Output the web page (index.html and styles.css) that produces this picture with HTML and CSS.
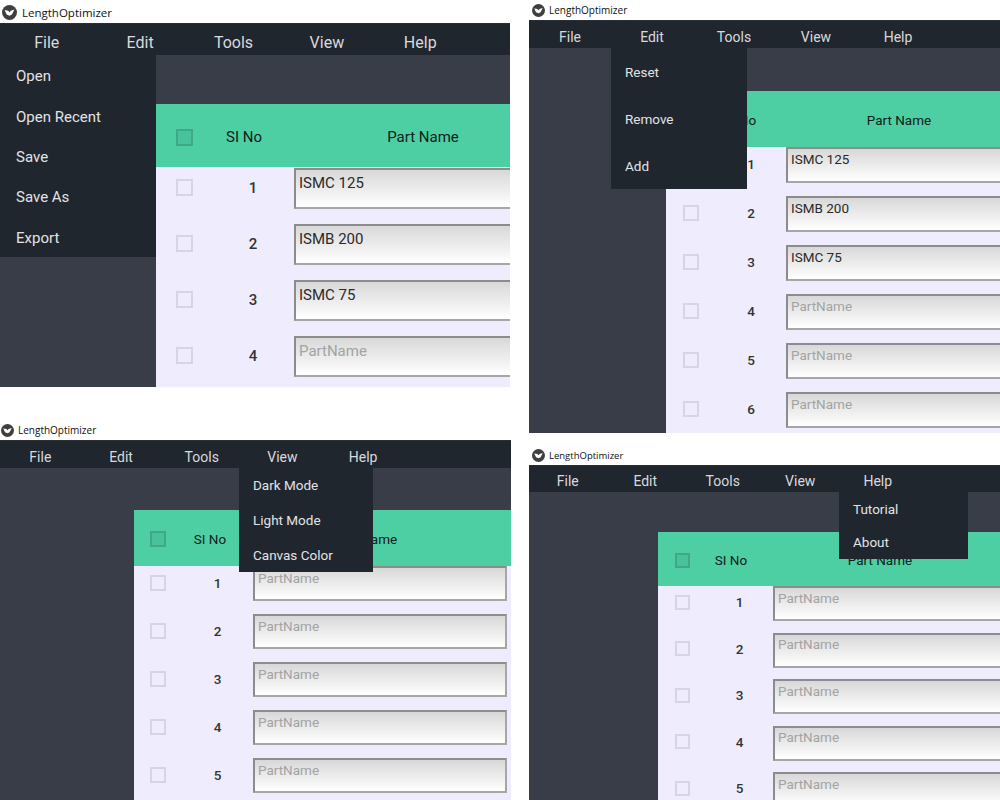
FILE: index.html
```html
<!DOCTYPE html>
<html lang="en">
<head>
  <meta charset="UTF-8">
  <title>LengthOptimizer</title>
  <link rel="stylesheet" href="styles.css">
</head>
<body>
  <!-- File menu open -->
  <section class="window win-file">
    <div class="titlebar">
      <svg class="logo" viewBox="0 0 16 16"><circle cx="8" cy="8" r="8" fill="#3f3f3f"/><path d="M2.8 5.4 6.6 6 8 7.8 9.4 6 13.2 4.8 10.6 10 8 11.4 5 10Z" fill="#fff"/></svg>
      <span>LengthOptimizer</span>
    </div>
    <nav class="menubar">
      <span>File</span><span>Edit</span><span>Tools</span><span>View</span><span>Help</span>
    </nav>
    <div class="main">
      <aside class="sidebar"></aside>
      <div class="content">
        <div class="band"></div>
        <div class="table-head">
          <div class="check-cell"><i class="box"></i></div>
          <div class="head-no">SI No</div>
          <div class="head-name">Part Name</div>
        </div>
        <div class="rows">
          <div class="row"><div class="check-cell"><i class="box"></i></div><div class="num">1</div><input class="part" value="ISMC 125" placeholder="PartName"></div>
          <div class="row"><div class="check-cell"><i class="box"></i></div><div class="num">2</div><input class="part" value="ISMB 200" placeholder="PartName"></div>
          <div class="row"><div class="check-cell"><i class="box"></i></div><div class="num">3</div><input class="part" value="ISMC 75" placeholder="PartName"></div>
          <div class="row"><div class="check-cell"><i class="box"></i></div><div class="num">4</div><input class="part" placeholder="PartName"></div>
        </div>
      </div>
    </div>
    <ul class="dropdown">
      <li>Open</li><li>Open Recent</li><li>Save</li><li>Save As</li><li>Export</li>
    </ul>
  </section>

  <!-- Edit menu open -->
  <section class="window win-edit">
    <div class="titlebar">
      <svg class="logo" viewBox="0 0 16 16"><circle cx="8" cy="8" r="8" fill="#3f3f3f"/><path d="M2.8 5.4 6.6 6 8 7.8 9.4 6 13.2 4.8 10.6 10 8 11.4 5 10Z" fill="#fff"/></svg>
      <span>LengthOptimizer</span>
    </div>
    <nav class="menubar">
      <span>File</span><span>Edit</span><span>Tools</span><span>View</span><span>Help</span>
    </nav>
    <div class="main">
      <aside class="sidebar"></aside>
      <div class="content">
        <div class="band"></div>
        <div class="table-head">
          <div class="check-cell"><i class="box"></i></div>
          <div class="head-no">SI No</div>
          <div class="head-name">Part Name</div>
        </div>
        <div class="rows">
          <div class="row"><div class="check-cell"><i class="box"></i></div><div class="num">1</div><input class="part" value="ISMC 125" placeholder="PartName"></div>
          <div class="row"><div class="check-cell"><i class="box"></i></div><div class="num">2</div><input class="part" value="ISMB 200" placeholder="PartName"></div>
          <div class="row"><div class="check-cell"><i class="box"></i></div><div class="num">3</div><input class="part" value="ISMC 75" placeholder="PartName"></div>
          <div class="row"><div class="check-cell"><i class="box"></i></div><div class="num">4</div><input class="part" placeholder="PartName"></div>
          <div class="row"><div class="check-cell"><i class="box"></i></div><div class="num">5</div><input class="part" placeholder="PartName"></div>
          <div class="row"><div class="check-cell"><i class="box"></i></div><div class="num">6</div><input class="part" placeholder="PartName"></div>
        </div>
      </div>
    </div>
    <ul class="dropdown">
      <li>Reset</li><li>Remove</li><li>Add</li>
    </ul>
  </section>

  <!-- View menu open -->
  <section class="window win-view">
    <div class="titlebar">
      <svg class="logo" viewBox="0 0 16 16"><circle cx="8" cy="8" r="8" fill="#3f3f3f"/><path d="M2.8 5.4 6.6 6 8 7.8 9.4 6 13.2 4.8 10.6 10 8 11.4 5 10Z" fill="#fff"/></svg>
      <span>LengthOptimizer</span>
    </div>
    <nav class="menubar">
      <span>File</span><span>Edit</span><span>Tools</span><span>View</span><span>Help</span>
    </nav>
    <div class="main">
      <aside class="sidebar"></aside>
      <div class="content">
        <div class="band"></div>
        <div class="table-head">
          <div class="check-cell"><i class="box"></i></div>
          <div class="head-no">SI No</div>
          <div class="head-name">Part Name</div>
        </div>
        <div class="rows">
          <div class="row"><div class="check-cell"><i class="box"></i></div><div class="num">1</div><input class="part" placeholder="PartName"></div>
          <div class="row"><div class="check-cell"><i class="box"></i></div><div class="num">2</div><input class="part" placeholder="PartName"></div>
          <div class="row"><div class="check-cell"><i class="box"></i></div><div class="num">3</div><input class="part" placeholder="PartName"></div>
          <div class="row"><div class="check-cell"><i class="box"></i></div><div class="num">4</div><input class="part" placeholder="PartName"></div>
          <div class="row"><div class="check-cell"><i class="box"></i></div><div class="num">5</div><input class="part" placeholder="PartName"></div>
        </div>
      </div>
    </div>
    <ul class="dropdown">
      <li>Dark Mode</li><li>Light Mode</li><li>Canvas Color</li>
    </ul>
  </section>

  <!-- Help menu open -->
  <section class="window win-help">
    <div class="titlebar">
      <svg class="logo" viewBox="0 0 16 16"><circle cx="8" cy="8" r="8" fill="#3f3f3f"/><path d="M2.8 5.4 6.6 6 8 7.8 9.4 6 13.2 4.8 10.6 10 8 11.4 5 10Z" fill="#fff"/></svg>
      <span>LengthOptimizer</span>
    </div>
    <nav class="menubar">
      <span>File</span><span>Edit</span><span>Tools</span><span>View</span><span>Help</span>
    </nav>
    <div class="main">
      <aside class="sidebar"></aside>
      <div class="content">
        <div class="band"></div>
        <div class="table-head">
          <div class="check-cell"><i class="box"></i></div>
          <div class="head-no">SI No</div>
          <div class="head-name">Part Name</div>
        </div>
        <div class="rows">
          <div class="row"><div class="check-cell"><i class="box"></i></div><div class="num">1</div><input class="part" placeholder="PartName"></div>
          <div class="row"><div class="check-cell"><i class="box"></i></div><div class="num">2</div><input class="part" placeholder="PartName"></div>
          <div class="row"><div class="check-cell"><i class="box"></i></div><div class="num">3</div><input class="part" placeholder="PartName"></div>
          <div class="row"><div class="check-cell"><i class="box"></i></div><div class="num">4</div><input class="part" placeholder="PartName"></div>
          <div class="row"><div class="check-cell"><i class="box"></i></div><div class="num">5</div><input class="part" placeholder="PartName"></div>
        </div>
      </div>
    </div>
    <ul class="dropdown">
      <li>Tutorial</li><li>About</li>
    </ul>
  </section>
</body>
</html>
```

FILE: styles.css
```css
html, body {
  margin: 0;
  height: 100%;
  background-color: #fff;
  overflow: hidden;
}
body {
  position: relative;
  width: 1000px;
  height: 800px;
  font-family: Roboto, "Liberation Sans", sans-serif;
}

/* the four app windows sit on the page like screenshots on a desktop */
.window {
  position: absolute;
  display: flex;
  flex-direction: column;
  overflow: hidden;
  background-color: #fff;
}
.win-file {
  left: 0; top: 0; width: 510px; height: 387px;
  --title-h: 24px; --title-size: 11.5px; --logo: 15px; --title-gap: 5px; --title-pad: 2px; --title-shift: 1px;
  --menu-h: 31px; --menu-w: 93.4px; --menu-size: 16px; --menu-pad: 6px; --size: 15px;
  --side: 156px; --band: 49px; --head: 63px; --head-pad: 3px;
  --col1: 56px; --col2: 82px; --col-no: 64px; --col-name: 294px;
  --box: 17px; --input-h: 41px; --gap: 15px; --input-w: 294px; --text-h: 30px;
  --rows-pad: 1px; --cell-shift: 2px;
  --pad-x: 16px; --item-h: 40.4px; --item-pad: 2px;
  --drop-left: 0; --drop-w: 156px;
}
.win-edit {
  left: 529px; top: 0; width: 471px; height: 433px;
  --title-h: 21px; --title-size: 10px; --logo: 13px; --title-gap: 4px; --title-pad: 3px; --title-shift: 0px;
  --menu-h: 27px; --menu-w: 82px; --menu-size: 14px; --menu-pad: 4px; --size: 13.5px;
  --side: 137px; --band: 43px; --head: 56px; --head-pad: 1px;
  --col1: 50px; --col2: 70px; --col-no: 48px; --col-name: 270px;
  --box: 16px; --input-h: 36px; --gap: 13px; --input-w: 270px; --text-h: 23px;
  --rows-pad: 0px; --cell-shift: 2px;
  --pad-x: 14px; --item-h: 47px; --item-pad: 0px;
  --drop-left: 82px; --drop-w: 136px;
}
.win-view {
  left: 0; top: 420px; width: 511px; height: 380px;
  --title-h: 21px; --title-size: 10px; --logo: 13px; --title-gap: 4px; --title-pad: 1px; --title-shift: 0px;
  --menu-h: 27px; --menu-w: 80.7px; --menu-size: 14px; --menu-pad: 4px; --size: 13.5px;
  --side: 134px; --band: 42px; --head: 56px; --head-pad: 1px;
  --col1: 48px; --col2: 71px; --col-no: 56px; --col-name: 254px;
  --box: 16px; --input-h: 35px; --gap: 13px; --input-w: 254px; --text-h: 23px;
  --rows-pad: 0px; --cell-shift: 2px;
  --pad-x: 14px; --item-h: 34.7px; --item-pad: 0px;
  --drop-left: 239px; --drop-w: 134px;
}
.win-help {
  left: 529px; top: 445px; width: 471px; height: 355px;
  --title-h: 21px; --title-size: 9.5px; --logo: 13px; --title-gap: 4px; --title-pad: 3px; --title-shift: 0px;
  --menu-h: 26px; --menu-w: 77.5px; --menu-size: 14px; --menu-pad: 4px; --size: 13.5px;
  --side: 129px; --band: 40px; --head: 54px; --head-pad: 2px;
  --col1: 48px; --col2: 67px; --col-no: 50px; --col-name: 248px;
  --box: 15px; --input-h: 35px; --gap: 11.5px; --input-w: 248px; --text-h: 23px;
  --rows-pad: 0px; --cell-shift: 3px;
  --pad-x: 14px; --item-h: 33.5px; --item-pad: 0px;
  --drop-left: 310px; --drop-w: 129px;
}

.titlebar {
  height: var(--title-h);
  flex: none;
  box-sizing: border-box;
  display: flex;
  align-items: center;
  gap: var(--title-gap);
  padding-left: var(--title-pad);
  padding-top: var(--title-shift);
  font-family: "Open Sans", sans-serif;
  font-size: var(--title-size);
  color: #111;
  border-bottom: 1px solid #2a2d33;
}
.logo {
  width: var(--logo);
  height: var(--logo);
}

.menubar {
  height: var(--menu-h);
  flex: none;
  box-sizing: border-box;
  padding-top: var(--menu-pad);
  display: flex;
  align-items: center;
  background-color: #20262e;
  color: #d9dadc;
  font-size: var(--menu-size);
}
.menubar span {
  width: var(--menu-w);
  text-align: center;
}

.main {
  flex: 1;
  display: flex;
  min-height: 0;
  background-color: #393d47;
}
.sidebar {
  width: var(--side);
  flex: none;
}
.content {
  flex: none;
  width: 600px;
}
.band {
  height: var(--band);
}

.table-head {
  height: var(--head);
  box-sizing: border-box;
  padding-top: var(--head-pad);
  display: flex;
  align-items: center;
  background-color: #4dcfa3;
  color: #10201a;
  font-size: var(--size);
}
.head-no {
  width: var(--col-no);
  text-align: center;
}
.head-name {
  width: var(--col-name);
  text-align: center;
}
.check-cell {
  width: var(--col1);
  flex: none;
  display: flex;
  justify-content: center;
}
.box {
  display: block;
  width: var(--box);
  height: var(--box);
  box-sizing: border-box;
  border: 2px solid #d6d5e3;
}
.table-head .box {
  border-color: #3fa888;
  background-color: #47c29a;
}

.rows {
  height: 600px;
  box-sizing: border-box;
  padding-top: var(--rows-pad);
  background-color: #efedfd;
  display: flex;
  flex-direction: column;
  gap: var(--gap);
}
.row {
  display: flex;
  align-items: center;
}
.row .check-cell,
.num {
  margin-bottom: var(--cell-shift);
}
.num {
  width: var(--col2);
  flex: none;
  text-align: center;
  font-size: var(--size);
  font-weight: 500;
  color: #333;
}
.part {
  width: var(--input-w);
  height: var(--input-h);
  flex: none;
  box-sizing: border-box;
  margin: 0;
  padding: 0 3px calc(var(--input-h) - var(--text-h));
  border: 2px solid #a6a6a6;
  border-top-color: #8c8c8c;
  border-left-color: #8c8c8c;
  border-radius: 0;
  outline: none;
  background: linear-gradient(#d8d8d8, #fff);
  font-family: inherit;
  font-size: var(--size);
  color: #2a2a2a;
}
.part::placeholder {
  color: #a3a3a3;
  opacity: 1;
}

/* open menu, hangs under the menubar over the table */
.dropdown {
  position: absolute;
  left: var(--drop-left);
  top: calc(var(--title-h) + var(--menu-h));
  width: var(--drop-w);
  margin: 0;
  padding: 0;
  list-style: none;
  background-color: #20262e;
  color: #e2e3e5;
  font-size: var(--size);
}
.dropdown li {
  height: var(--item-h);
  box-sizing: border-box;
  display: flex;
  align-items: center;
  padding-left: var(--pad-x);
  padding-top: var(--item-pad);
}
```
